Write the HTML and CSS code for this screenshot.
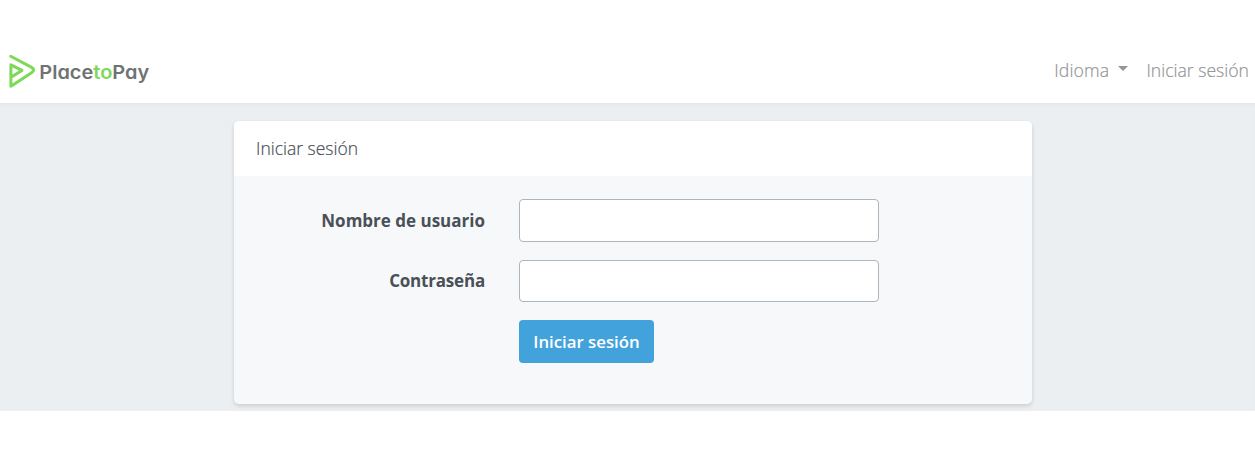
FILE: index.html
```html
<!DOCTYPE html>
<html lang="es">
<head>
<meta charset="utf-8">
<title>Iniciar sesión</title>
<link rel="stylesheet" href="styles.css">
</head>
<body>
<header class="navbar">
  <a class="brand" aria-label="PlacetoPay">
    <svg class="logo" viewBox="0 0 144 38" width="144" height="38">
      <path class="logo-mark" d="M2.7 4.2 L23.2 15.1 Q28 18 23.2 21.1 L2.9 34.2 V12.8 L14 18.4 L3 25.2"/>
      <text class="logo-text" x="31.3" y="26.8" textLength="110" lengthAdjust="spacingAndGlyphs">Place<tspan class="logo-accent">to</tspan>Pay</text>
    </svg>
  </a>
  <nav class="links">
    <a class="link language"><span class="language-name">Idioma</span><span class="caret"></span></a>
    <a class="link">Iniciar sesión</a>
  </nav>
</header>
<main class="content">
  <section class="card">
    <h1 class="card-header">Iniciar sesión</h1>
    <form class="card-body">
      <label class="label" for="user">Nombre de usuario</label>
      <input class="input" id="user" type="text">
      <label class="label label-password" for="password">Contraseña</label>
      <input class="input" id="password" type="password">
      <button class="button" type="button">Iniciar sesión</button>
    </form>
  </section>
</main>
</body>
</html>
```
FILE: styles.css
```css
* { box-sizing: border-box; }
body {
  margin: 0;
  padding-top: 40px;
  background: #fff;
  font-family: "Open Sans", "Noto Sans", sans-serif;
  font-size: 17px;
}
.navbar {
  height: 63px;
  padding: 0 6px 3px 8px;
  display: flex;
  align-items: center;
  justify-content: space-between;
}
.brand { display: flex; padding-top: 2px; }
.logo-mark {
  fill: none;
  stroke: #7ed957;
  stroke-width: 3;
  stroke-linecap: round;
  stroke-linejoin: round;
}
.logo-text {
  font: 600 18.8px Inter, sans-serif;
  font-feature-settings: "cv11";
  fill: #707372;
}
.logo-accent { fill: #7ed957; }
.links { display: flex; gap: 18px; }
.link {
  color: #939597;
  font-size: 17.6px;
  font-weight: 300;
  line-height: 24px;
  white-space: nowrap;
  -webkit-text-stroke: .2px #939597;
}
.language { display: flex; align-items: center; }
.language-name { letter-spacing: .2px; }
.caret {
  margin: -3px 0 0 9px;
  border: 5.5px solid transparent;
  border-top-color: #939597;
  border-bottom: 0;
}
.content {
  height: 308px;
  padding: 18px 223px 0 234px;
  background: #ebeff2;
  box-shadow: inset 0 4px 4px -2px rgba(0, 0, 0, .03);
}
.card {
  height: 283px;
  border-radius: 5px;
  background: #f7f8fa;
  box-shadow: 0 2px 4px rgba(0, 0, 0, .14);
}
.card-header {
  margin: 0;
  height: 55px;
  padding-left: 22px;
  border-radius: 5px 5px 0 0;
  background: #fff;
  color: #495057;
  font-size: 17.5px;
  font-weight: 300;
  line-height: 55px;
  -webkit-text-stroke: .2px #495057;
}
.card-body {
  display: grid;
  grid-template-columns: 251px 360px;
  grid-template-rows: 43px 42px 43px;
  column-gap: 34px;
  row-gap: 18px;
  padding-top: 23px;
}
.label {
  color: #495057;
  font-weight: 700;
  line-height: 43px;
  text-align: right;
}
.label-password {
  line-height: 41px;
  letter-spacing: -.2px;
}
.input {
  width: 100%;
  height: 100%;
  border: 1px solid #aeb6bd;
  border-radius: 4px;
  background: #fff;
}
.button {
  grid-column: 2;
  width: 135px;
  padding: 0;
  border: 0;
  border-radius: 4px;
  background: #42a2dc;
  color: #fff;
  font: 600 16.8px "Open Sans", "Noto Sans", sans-serif;
}
```
